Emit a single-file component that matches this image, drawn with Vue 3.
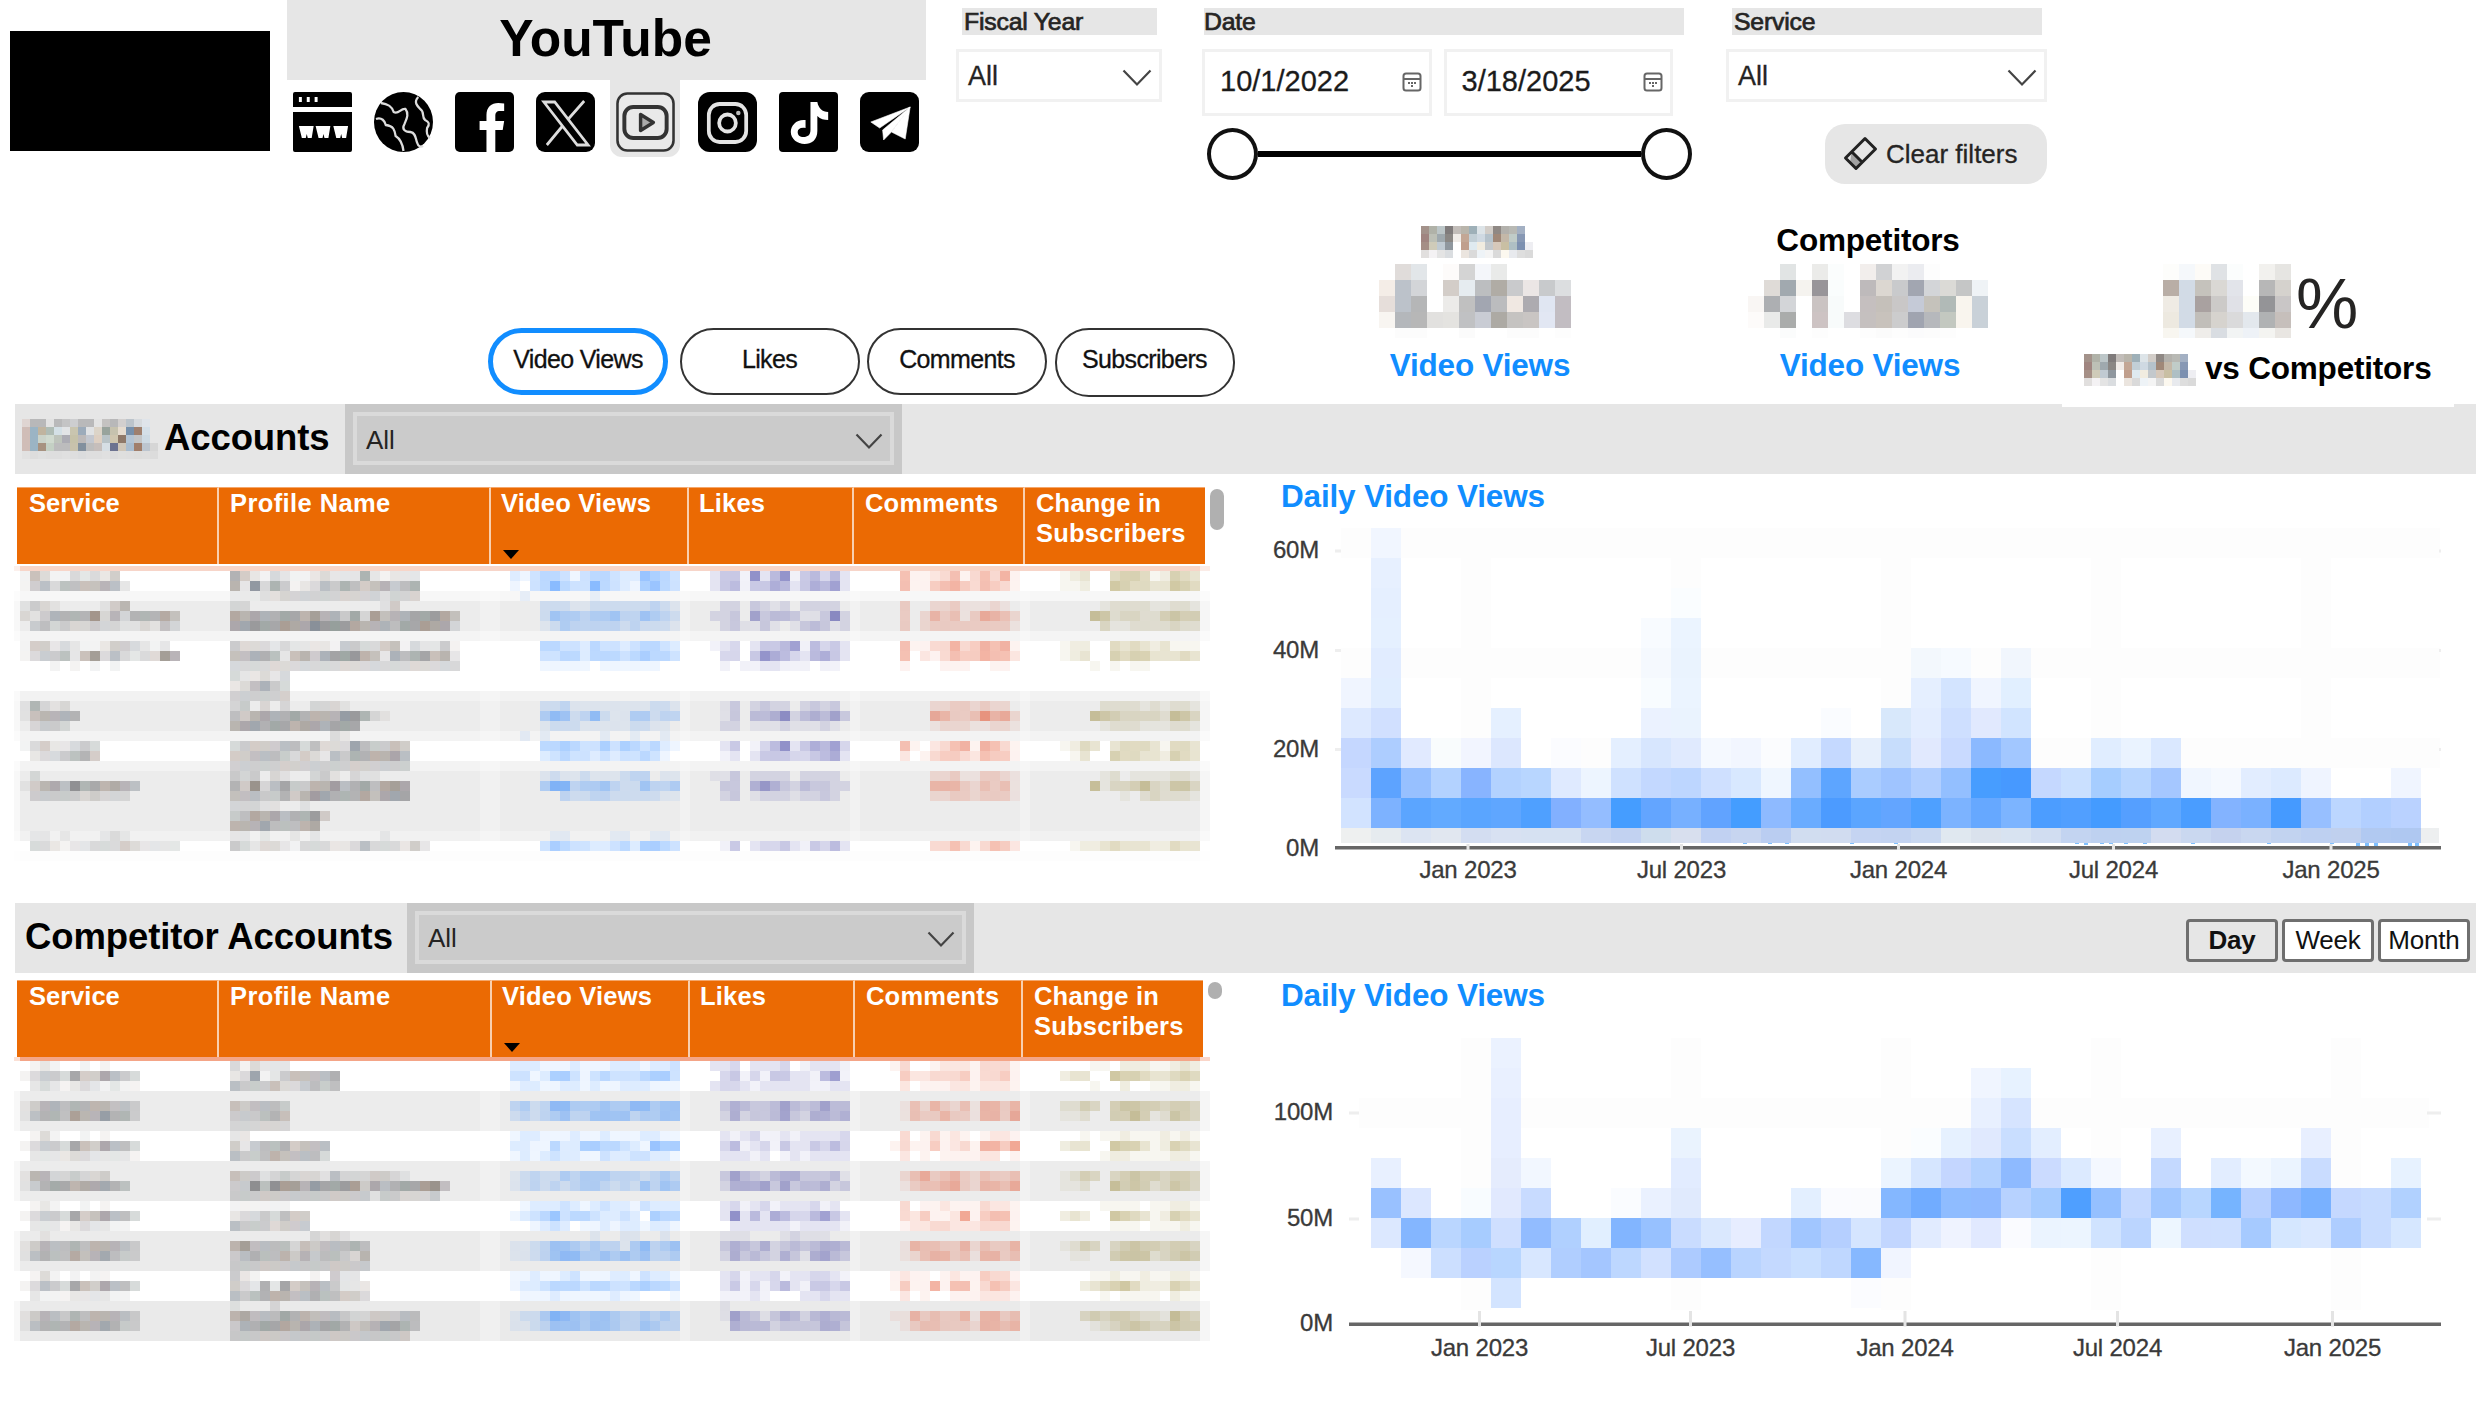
<script setup>
const services = ['web', 'globe', 'facebook', 'x', 'youtube', 'instagram', 'tiktok', 'telegram']
const metrics = ['Video Views', 'Likes', 'Comments', 'Subscribers']

// Inks of the obscured table cells, per column
const inks = {
  s: [20, [84, 84, 88]],
  p: [230, [80, 80, 84]],
  v: [510, [30, 125, 255]],
  l: [700, [72, 72, 165]],
  c: [880, [225, 85, 50]],
  g: [1060, [150, 132, 50]],
}
const keys = ['s', 'p', 'v', 'l', 'c', 'g']
const tints = [[0, 0, 0], [28, 6, -12], [-8, 4, 14], [4, 4, 4], [14, 4, 8], [-6, 8, 0], [18, 8, -6]]

function cells(lines) {
  const out = []
  for (const [y, ...fields] of lines) {
    fields.forEach((str, f) => {
      const key = keys[f]
      const [x0, ink] = inks[key]
      for (let i = 0; i < str.length; i++) {
        const d = +str[i]
        if (!d) continue
        const t = f < 2 ? tints[(i * 5 + y / 10 * 3 | 0) % 7] : tints[((i * 3 + (y / 10 | 0)) % 2) * 3]
        const rgb = ink.map((c, k) => Math.max(0, c + t[k] * 1.1))
        out.push({ x: x0 + i * 10, y, fill: `rgba(${rgb.map(Math.round).join(',')},${(d * 0.075).toFixed(3)})` })
      }
    })
  }
  return out
}

const ownRows = cells([
  [571, '1531132324', '6421321123222621222', '21344313443226543', '024418258145352', '00511235135361', '12300455412543'],
  [581, '14535555652', '6283641235465456456', '10347433743215643', '024514465246572', '00511456435431', '11200654433654'],
  [591, '', '1112233333333332333', '01000000100000000', '', '', ''],
  [601, '132100001350', '2200000000000001300', '00022211222222321', '002203212022220', '00300223111210', '00001222211221'],
  [611, '2135555825255564', '65655665755362745566764', '00025443445335432', '022306344311382', '00302534136542', '00065233224544'],
  [621, '0342322322112142', '66766766877765554667662', '00012433333232221', '002311310134312', '00302333333331', '00003112222322'],
  [641, '14423211244321200', '43332322221443345132241', '00044332433234432', '012302445715342', '00511336346561', '12200434323111'],
  [651, '1344525835323386', '55665256467786526567562', '00033442444345443', '003304865325642', '00502135446552', '12300545533343'],
  [661, '0001010101000', '33333333333333333333333', '00011111011111100', '001011221110110', '00100011100110', '00010101100000'],
  [671, '', '322323', '', '', '', ''],
  [681, '', '235643', '', '', '', ''],
  [691, '', '333333', '', '', '', ''],
  [701, '152120', '2302020022210', '00022311111111221', '001302322023230', '00000223323220', '00002222121221'],
  [711, '145555', '4356556555577521', '00046523621144233', '001304458245463', '00000653348562', '00065433332653'],
  [721, '023320', '5665665665666', '00012221111122110', '002201112111210', '00000122211221', '00001222111221'],
  [731, '', '0000000000210', '01010000010010010', '', '', ''],
  [741, '13422343', '344445535333754454', '00044543353543421', '002401358246573', '00510235616531', '12430344431443'],
  [751, '02334564', '445554343254666675', '00023433232334310', '001202444334562', '00201344325441', '01300544332543'],
  [761, '', '333333333333333333', '', '', '', ''],
  [771, '020000000', '323021002310211000', '00012112111233011', '011302222022220', '00000223113321', '00001201111221'],
  [781, '135648565654', '538246335574564676', '00047734453225334', '003305753243322', '00000555324341', '00061334632553'],
  [791, '033333232220', '444335357655564666', '00000322332222211', '002301222122320', '00000223323331', '00000010232221'],
  [801, '', '222110010', '', '', '', ''],
  [811, '', '3465645573', '', '', '', ''],
  [821, '', '5556444560', '', '', '', ''],
  [831, '0110100012100', '1101001010000001', '00001100001100110', '', '', ''],
  [841, '0332122333432222', '43233213332235333242', '00035433223425543', '001402334214352', '00000335313542', '01223433322433'],
])

const competitorRows = cells([
  [1061, '0121001010', '3132220000', '22211121112221223', '022302223012221', '01300122213331', '00011022211232'],
  [1071, '134437447543', '23712455556', '33125531343334553', '003413144221571', '00422333413341', '23300655433454'],
  [1081, '023212321211', '5444533454500', '12211221211222111', '023321222221122', '00201112212221', '00010020011221'],
  [1101, '135545555443', '434443', '34236644454466455', '003543346434644', '00142532415535', '22430455443443'],
  [1111, '145547557553', '333454', '23234533555534455', '002523346325545', '00143353315536', '11200446412543'],
  [1121, '', '222222', '', '', '', ''],
  [1131, '0131001010', '2200000', '12211121121112211', '002123112122223', '00301312101221', '00101121112121'],
  [1141, '134437547553', '4245564555', '22114225544321655', '003512314224353', '01311412316647', '23300655312543'],
  [1151, '022223322221', '5445655553', '12123221132233221', '002221201212222', '00201011112201', '00001221111221'],
  [1171, '15522322300', '4331232221422233210', '12322434443332343', '003643245533341', '00246345324334', '12430345443443'],
  [1181, '13566566654', '3384877576677364566784', '12323234432325354', '002555636344523', '00134456325546', '11200645423543'],
  [1191, '', '3333333333333313322230', '', '', '', ''],
  [1201, '0121001010', '1111110', '01222321232213222', '002312312223120', '00301121113221', '00001111011221'],
  [1211, '134437457553', '23343544', '12346344322320544', '002825265335742', '00324112714551', '23200654312543'],
  [1221, '022212322110', '54443444', '00123201121221221', '000222222122221', '00122332223331', '00000111011121'],
  [1231, '0010000000', '0000000021210', '00000000100110010', '001110001211100', '', ''],
  [1241, '135445455543', '57444424344454', '11235543433146345', '003543523434554', '00154433524335', '12430345443443'],
  [1251, '145446456433', '34544535344325', '11235664454545334', '002534325315643', '00124553415534', '01100455523454'],
  [1261, '', '33333333333333', '', '', '', ''],
  [1271, '0131010110', '4210000010422', '11211231112213221', '002312231223321', '01211012114331', '00011211211221'],
  [1281, '135437547553', '43262745654222', '12234443443345443', '002413135214434', '01411615513542', '00234564222543'],
  [1291, '021112222110', '54566655655443', '01112111112110001', '001112100022322', '00201001112221', '00001011110211'],
  [1301, '', '1000200000', '', '001000000000000', '', ''],
  [1311, '135435455543', '5644465544432233344', '12247654554334343', '001643135424544', '01153433515534', '00343443221643'],
  [1321, '145556556533', '3556665656653456654', '11235554554335433', '000544423333553', '00134433325545', '00012345433544'],
  [1331, '', '333333333333333333', '', '', '', ''],
])

const strip = (y, h, fill) => ({ y, h, fill })
const accounts = [
  {
    id: 'own', title: 'Accounts', masked: true, x: [202, 272, 198, 165, 171, 180], thumb: 41,
    selectWidth: 557, selectStart: 330, viewBox: '0 564 1240 339', height: 339, cells: ownRows,
    strips: [
      strip(566, 5, '#f7d5c9'), strip(591, 10, '#f7f7f7'), strip(601, 30, '#ececec'), strip(631, 10, '#f4f4f4'),
      strip(691, 10, '#f2f2f2'), strip(701, 30, '#ececec'), strip(731, 10, '#f3f3f3'), strip(761, 10, '#f3f3f3'),
      strip(771, 60, '#ececec'), strip(831, 10, '#f1f1f1'), strip(851, 10, '#fdfdfd'),
    ],
  },
  {
    id: 'competitor', title: 'Competitor Accounts', masked: false, x: [202, 273, 198, 165, 168, 180], thumb: 17,
    selectWidth: 567, selectStart: 392, viewBox: '0 1057 1240 345', height: 345, cells: competitorRows,
    strips: [
      strip(1057, 4, '#f4a587'), strip(1091, 40, '#ececec'), strip(1161, 40, '#ececec'),
      strip(1231, 40, '#ebebeb'), strip(1301, 40, '#eaeaea'),
    ],
  },
]
const heads = ['Service', 'Profile Name', 'Video Views', 'Likes', 'Comments', 'Change in\nSubscribers']

// Heatmap rows: first column index, then colours ('-' leaves a cell empty)
function heat(rows) {
  return rows.flatMap(([y, h, ...runs]) => runs.flatMap((run) => {
    const [start, ...cols] = run.split(' ')
    return cols.map((c, i) => ({ x: 1341 + (+start + i) * 30, y, h, fill: c === '-' ? 'none' : '#' + c }))
  }))
}
const charts = [
  {
    viewBox: '1240 474 1244 429', height: 429, titleY: 506.5, axisX: 1335, axisY: 846, labelX: 1319, xBase: 878,
    yLabels: [['60M', 557.5, 551], ['40M', 658, 650.5], ['20M', 756.5, 749.5], ['0M', 856, 0]],
    xLabels: [['Jan 2023', 1468], ['Jul 2023', 1681.5], ['Jan 2024', 1898.5], ['Jul 2024', 2113.5], ['Jan 2025', 2331]],
    washes: [[1341, 528, 1099, 30], [1341, 648, 1099, 30], [2030, 738, 410, 30], [1461, 528, 30, 240], [1671, 528, 30, 90], [1881, 528, 30, 180], [2091, 528, 30, 210], [2301, 528, 30, 240]],
    tickTop: 844,
    cells: heat([
      [528, 30, '1 f1f6ff'],
      [558, 30, '1 e7f0ff'],
      [588, 30, '1 e5efff', '11 fafdff'],
      [618, 30, '1 e5f0ff', '10 f8fbff ebf4ff'],
      [648, 30, '1 e1ecff', '10 f5f9fe eaf3fe', '19 f3f8fd f6faff fdfdfd f1f6fd'],
      [678, 30, '0 f0f5ff e0edff', '10 f8fcff ebf4ff', '19 e5efff d3e4ff f0f5ff e1efff'],
      [708, 30, '0 dde9ff d1e0ff', '5 e5f0ff', '10 ebf2ff eaf3fe', '16 fafcff', '18 d8e8fb e3edff cedfff e1e9fe d1e4ff'],
      [738, 30, '0 c5d7ff adcdff e1eaff f9fcfd f2f5ff dce7fe - fbfcff fdfdfd e4efff d7e6fe e0eafe f5f9ff f2f6ff fbfcfe e1edff c5d9ff e6effc c7ddfc e1e9fe c9daff 8bb9ff a2c7ff - - e0edff eaf3ff dae8ff'],
      [768, 30, '0 c9daff 5da3ff 97c0ff b3d2ff 88b4ff b3d2ff b8d6ff dfeaff edf5ff cfe1ff c3d8ff bdd6ff cfe0ff d8e8ff eff6ff 93bfff 5da5ff aaccff 9fc4ff b0ceff 93bfff 479dff 4799ff c5d8ff cae0ff a6cdff b7d5ff a5c7ff f0f6ff f5f9ff e2edff dceaff eff4ff - - f0f5ff'],
      [798, 30, '0 d2e3ff 7db2ff 5ba5ff 62aaff 5aa5ff 5fa6ff 4fa0ff 82b0ff 94bdff 459dff 63a5ff 77b0ff 61a3ff 449dff 8ebaff 6aacff 4c9bff 5ba5ff 63a5ff 4ea0ff 7cb3ff 66a8ff 7cb4ff 4c9dff 519fff 449bff 559fff 60a8ff 4a9dff 83b3ff 7ab1ff 459aff 97bfff bcd6ff b2cfff bad2ff'],
      [828, 15, '0 eef0f0 e6ebef dce4f2 e1e7f0 d3ddf1 d8e1f2 d6e1f2 d6e1f2 c8d6f1 c2d2f1 cedded d8dfee c1d1f2 c7d5f0 bacdf1 d1ddf0 d1dcf0 c5d4f2 c3d3f1 c9d8f1 e0e8f0 dae2ed d8e3f1 d1ddf1 c3d4f1 bed1f0 bed2f0 d3dcf0 cad8f0 c5d2ee c9d7f0 c2d3f0 bed0f1 c0d0ee b1c9f1 afc8f1'],
    ]),
    stubs: [[1745, 1], [1770, 1], [1787, 1], [1852, 1], [1896, 1], [2077, 1], [2086, 2], [2102, 1], [2111, 1], [2126, 1], [2145, 1], [2193, 1], [2269, 1], [2332, 1], [2358, 3], [2367, 3], [2376, 3], [2410, 4], [2417, 4]],
    tail: true,
  },
  {
    viewBox: '1240 973 1244 429', height: 429, titleY: 1005.5, axisX: 1349, axisY: 1322.5, labelX: 1333, xBase: 1355.5,
    yLabels: [['100M', 1119.5, 1113], ['50M', 1225.5, 1219], ['0M', 1331, 0]],
    xLabels: [['Jan 2023', 1479.5], ['Jul 2023', 1690.5], ['Jan 2024', 1905], ['Jul 2024', 2117.5], ['Jan 2025', 2332.5]],
    washes: [[1359, 1098, 1070, 30], [1461, 1038, 30, 272], [1671, 1038, 30, 272], [1881, 1038, 30, 272], [2091, 1038, 30, 272], [2331, 1038, 30, 272]],
    tickTop: 1311,
    cells: heat([
      [1038, 30, '5 ebf2ff'],
      [1068, 30, '5 e9f0ff', '21 f0f5ff e7f2ff'],
      [1098, 30, '5 e7eeff', '21 e8f0ff d6e4ff'],
      [1128, 30, '5 e7eeff', '11 eaf3fe', '19 fafdff e6f1ff e0e9fe c9deff e3eeff', '27 e8f0ff', '32 e8efff'],
      [1158, 30, '1 e8f0ff', '5 e5ecfd f2f7ff', '11 e2ecff', '18 ebf4ff d6e6ff c4d6ff b2d1ff 8ebaff cbdbff dceaff f4f8ff - c4d9ff - e2edff f3f9ff ebf4ff c9dcff - - e7f2ff'],
      [1188, 30, '1 99c1ff dce7ff - f8fcff e1e9fe c8dbff - - fafcff eaf1ff e0eafd - - - e3efff fafbff fafbfe 84b7ff 71acff 8fbcff 90baff b7d2ff a5cbff 4f9fff 95c0ff c5d9ff a1c7ff b8d6ff 76b4ff b7d0ff 8eb8ff 79b1ff c5d8ff c8dcff b1d1ff'],
      [1218, 30, '1 dce8ff 84b6ff bad6ff a7ccff cfdfff 92bcff b0d0ff e1efff 82b5ff 97c1ff c9dcff dae8fe e7edff c2d7ff a1c6ff b5cfff d5e5ff c2d6ff e1ebff eff3ff e1e9ff fafbff ebf4ff ecf5ff d0e3ff bbd5ff edf6ff cfdfff cfe0ff a6caff d5e7ff dae8ff aecdff c8dcff d6e7ff'],
      [1248, 30, '2 f5f8ff ccdfff bad1ff b8d6ff d8e7ff b0ceff a4c6ff bdd7ff d2e1ff adcbff 96bfff b9d4ff c4d9ff c9dfff bfd7ff 86b8ff f1f5ff'],
      [1278, 30, '5 d3e4ff', '17 fbfcff'],
    ]),
    stubs: [],
    tail: false,
  },
]

// Obscured figures and names
function mosaic(size, rows) {
  return rows.flatMap((row, r) => row.split(' ').map((c, i) => ({ x: i * size, y: r * size, size, fill: c === '-' ? 'none' : '#' + c })))
}
const ownValue = mosaic(16, [
  '- e0dcda e2e6e9 - fdfbfa d4d4d4 f4f6fa e9eae9',
  'f4ede7 bcc2ca d3d5d8 - d3cdc8 e6ecf0 bcbec0 b0aca5 c9cacc ebe6e5 c8cacc dcdee0',
  'e6deda bcc2ca b5b6b7 - ecebe9 c0c0c0 a2a6b1 bbbcbe f0e8e2 adabb0 e0e6f2 c2bdc2',
  'f8f5f1 b4b7bb b7b7b7 e2e1df e4e3e0 c0c1c3 c9ccd4 adaaa4 c5c3c1 c9c5c3 e2e7f3 c2bdc2',
  '- fcfcfc fcfcfc - - fbfbfb - - fcfcfc fcfcfc - fdfdfd',
])
const rivalValue = mosaic(16, [
  '- - e1e4e4 - ebebe9 fbfdfd - f2eeec d1d2d4 f2f2f2 ebecf0 fdfdfd',
  '- dfdbd7 a1a9af f5f3ef 989599 fafdfd - bebabb dcd7d1 c9cacc a2a6b1 d3d5d8 dbdad6 c5c6c6 eff3f6',
  'f9f6f4 adafb2 d3d5d8 - cac3c2 f8fbfb - c5bfbf c5c0ba c9c7c7 c5cad7 c5c2bb b1bab7 f9f5ee c9d1d8',
  'fdfbfa e9eae9 aaacab - cdc3c3 f8fbfb dddde1 c5c0bf c8c2bc cccccd a0a4b0 b6b8bc c3c8c0 f9f5ee c9d1d8',
  '- - fbfcfc - fdfdfd - - fdfdfd fbfbfb fdfdfd fbfbfc fcfcfc fdfdfd',
])
const ratioValue = mosaic(16, [
  'fdfdfb f5f8fb fdfbf7 dfe2e5 fbfdfd - f2f1ee e6e5e2',
  'b9aea6 d2dbe6 c5c2bc dad8d4 e2e4ea - b7b7b7 d5d2cd',
  'efebe4 d2dbe6 a9a1a0 cccac8 e0e1e7 fdfdf8 949497 c9c6c6',
  'ede9e0 d2dbe6 c1beb9 d6d3ce dadadb e3e8ed b0b2b3 c6bfbb',
  'f8f6f0 f5f8fb efedea d9dde2 f2f4f4 eef2f7 f4f4f1 e9e6e2',
])
const brand = mosaic(8, [
  'a3928a b0b2a8 bcc6c8 7f7b7b c2bdb9 b9b5ab 9eb0b8 dde4e8 d2cdc8 8f8884 b3b1ac b8b9b4 a3b0c3',
  'a08580 bdc0b6 9fa9ae 8a8784 f0ece8 c3a795 c2cfd6 cfd9e2 b5c2cb a08878 c4b8a8 c0ccc8 8798b4',
  'a58f86 cfcbb9 c0cad2 8f979e ffffff c09f8d dfeaf0 f1ece0 c3c8cc d6c8ba c9bfa3 aebfc4 7c90b0 eeeef2',
  'e1dfde f4f2f4 e4e4e4 dadde0 ffffff ebe5df dadada eef3f7 f4f4f4 dadada fcf8ef e8eaee dedede dadada',
])
const heading = mosaic(8, [
  'dfd5d2 b8b8b9 b8b8b9 e2e2e2 b9b9ba c4c4c5 cdced0 b9b9ba b9b9ba e3e3e3 c4c2c1 b8b8b9 d2cfce bcc4cb d6dade dfe4ea',
  'd0bdb7 9bb4c4 c0b49f afbcb5 d4e0e6 e2e4e6 c9c5af 9cabba e0e2e4 dcd4c8 98a39c c6c2ae e6dccf 7790ab 9f806e d4dfe8',
  'd0bdb7 9bb4c4 cbd3c9 d0dacf bec4bc acacb4 c6c2a9 bcb9b9 c3c7cf ddcfc2 b9c3c7 cfc6af 8e7868 b3c4d4 c3c5c7 cddae4',
  'd0bdb7 9bb4c4 a79280 c4d0c4 bcbcbd bcbcbd c8c2ac 82909e bdbdbd c6bebb d6dee4 6d7390 cfc6b8 a9bcce a07e6b bcc5cf d6d6d6',
  'e1e1e1 dddddd dfe0e0 dedede dedede e0e0e0 dedede dbdcdd dedede dedede e0e0e0 dcdcdd dfdfde dedede dddddc dedede dcdcdc',
])
</script>

<template>
  <main class="report">
    <header class="top">
      <div class="logo"></div>
      <section class="brand">
        <h1>YouTube</h1>
        <nav class="services">
          <a v-for="s in services" :key="s" class="service" :class="{ active: s === 'youtube' }">
            <svg viewBox="0 0 60 60" width="59" height="60" preserveAspectRatio="none">
              <g v-if="s === 'web'">
                <path d="M2 0h56q2 0 2 2v13H0V2q0-2 2-2zM0 20h60v38q0 2-2 2H2q-2 0-2-2z" />
                <path d="M6 5h3v5H6zM14 5h3v5h-3zM22 5h3v5h-3z" fill="#fff" />
                <path d="M6 34h15l-2 12h-4l-1-4-1 4H9zM23 34h15l-2 12h-4l-1-4-1 4h-4zM41 34h15l-2 12h-4l-1-4-1 4h-4z" fill="#fff" />
              </g>
              <g v-else-if="s === 'globe'">
                <circle cx="30" cy="30" r="30" />
                <path d="M7 11c7 1 11 3 13 9 5 3 7-4 12-3 4 5 1 10-1 15-3 5 0 8 6 8 6 1 5 7 7 11 1 4 4 4 6 3M2 27c6-2 9 2 10 6 8 1 9 5 10 11 5 3 7 7 8 15M45 5c-5 5-1 9 2 12 5 3 1 8 5 11 4 2 5 4 2 8-1 5 0 8 3 10" fill="none" stroke="#ddd" stroke-width="2.300" />
              </g>
              <g v-else-if="s === 'facebook'">
                <rect width="60" height="60" rx="5" />
                <path d="M32 60V38h-7v-9h7v-6c0-8 5-12 12-12l6 .5V19h-4c-4 0-5 2-5 5v5h9l-1.500 9H41v22z" fill="#fff" />
              </g>
              <g v-else-if="s === 'x'">
                <rect width="60" height="60" rx="9" />
                <path d="M8 10h11l34 43H42zM49 9L32 28M27 34L11 53" fill="none" stroke="#ddd" stroke-width="2.800" />
              </g>
              <g v-else-if="s === 'youtube'" fill="none" stroke="#333">
                <rect x="1.500" y="1.500" width="57" height="57" rx="10" stroke-width="2.600" fill="#e9e9e9" />
                <rect x="8.500" y="15" width="43" height="31" rx="9" stroke-width="4" />
                <path d="M25 22.500v16l13-8z" stroke-width="3.500" stroke-linejoin="round" fill="#aaa" />
              </g>
              <g v-else-if="s === 'instagram'">
                <rect width="60" height="60" rx="12" />
                <g fill="none" stroke="#e4e4e4" stroke-width="3.800"><rect x="11" y="12" width="38" height="38" rx="11" /><circle cx="30" cy="31" r="8.500" /></g>
                <circle cx="41" cy="21" r="2.300" fill="#bbb" />
              </g>
              <g v-else-if="s === 'tiktok'">
                <rect width="60" height="60" rx="4" />
                <path d="M32 10h7c1 6 5 10 11 10v8c-4 0-8-1-11-4v15c0 9-6 13-13 13S12 47 12 40s6-13 15-12v8c-5-1-8 1-8 4s2 5 6 5 7-2 7-7z" fill="#fff" />
              </g>
              <g v-else>
                <rect width="60" height="60" rx="9" />
                <path d="M51 15L11 30l9 6zM51 15L23 38l1 10 7-7zM51 15L32 40l14 7z" fill="#fff" stroke="#fff" stroke-width=".6" />
              </g>
            </svg>
          </a>
        </nav>
      </section>

      <section class="slicer fiscal">
        <label>Fiscal Year</label>
        <div class="select"><span>All</span><svg class="chev" viewBox="0 0 30 18" width="30" height="18"><path d="M1.500 1.500L15 15.500 28.500 1.500" /></svg></div>
      </section>

      <section class="slicer date">
        <label>Date</label>
        <div class="dates">
          <div v-for="d in ['10/1/2022', '3/18/2025']" :key="d" class="dateBox">
            <span>{{ d }}</span>
            <svg viewBox="0 0 20 20" width="20" height="20"><rect x="1.500" y="1.500" width="17" height="17" rx="2.500" fill="none" stroke="#666" stroke-width="2" /><path d="M2 7h16M6 11h2M9 11h2M12 11h2M9 14h2" fill="none" stroke="#666" stroke-width="2" /></svg>
          </div>
        </div>
        <div class="slider"><i></i><b></b><i></i></div>
      </section>

      <section class="slicer serviceSlicer">
        <label>Service</label>
        <div class="select"><span>All</span><svg class="chev" viewBox="0 0 30 18" width="30" height="18"><path d="M1.500 1.500L15 15.500 28.500 1.500" /></svg></div>
        <button class="clear">
          <svg viewBox="0 0 35 36" width="35" height="36"><path d="M22 2.500L32.500 13 13 32.500 2.500 22z M8.500 15.500L19 26" fill="none" stroke="#222" stroke-width="3" stroke-linejoin="round" /><path d="M8.500 16L19 26.500l-6 6L7 27z" fill="#222" opacity=".35" /></svg>
          <span>Clear filters</span>
        </button>
      </section>
    </header>

    <section class="summary">
      <div class="pills">
        <button v-for="(m, i) in metrics" :key="m" class="pill" :class="{ on: i === 0, tall: i === 3 }">{{ m }}</button>
      </div>
      <div class="kpi own">
        <svg class="name" viewBox="0 0 112 32" width="112" height="32" shape-rendering="crispEdges"><rect v-for="(c, i) in brand" :key="i" :x="c.x" :y="c.y" width="8" height="8" :fill="c.fill" /></svg>
        <svg class="value" viewBox="0 0 192 74" width="192" height="74" shape-rendering="crispEdges"><rect v-for="(c, i) in ownValue" :key="i" :x="c.x" :y="c.y" width="16" height="16" :fill="c.fill" /></svg>
        <span class="metric">Video Views</span>
      </div>
      <div class="kpi rival">
        <span class="who">Competitors</span>
        <svg class="value" viewBox="0 0 240 74" width="240" height="74" shape-rendering="crispEdges"><rect v-for="(c, i) in rivalValue" :key="i" :x="c.x" :y="c.y" width="16" height="16" :fill="c.fill" /></svg>
        <span class="metric">Video Views</span>
      </div>
      <div class="kpi ratio">
        <div class="percent">
          <svg viewBox="0 0 134 74" width="134" height="74" shape-rendering="crispEdges"><rect v-for="(c, i) in ratioValue" :key="i" :x="c.x" :y="c.y" width="16" height="16" :fill="c.fill" /></svg>
          <span>%</span>
        </div>
        <div class="versus">
          <svg viewBox="0 0 112 32" width="112" height="32" shape-rendering="crispEdges"><rect v-for="(c, i) in brand" :key="i" :x="c.x" :y="c.y" width="8" height="8" :fill="c.fill" /></svg>
          <span>vs Competitors</span>
        </div>
      </div>
    </section>

    <template v-for="(a, n) in accounts" :key="a.id">
      <section class="band">
        <h2 :style="{ width: a.selectStart + 'px' }">
          <svg v-if="a.masked" viewBox="0 0 136 40" width="136" height="40" shape-rendering="crispEdges"><rect v-for="(c, i) in heading" :key="i" :x="c.x" :y="c.y" width="8" height="8" :fill="c.fill" /></svg>
          <span>{{ a.title }}</span>
        </h2>
        <div class="bandSelect" :class="a.id" :style="{ width: a.selectWidth + 'px' }">
          <div><span>All</span><svg class="chev" viewBox="0 0 28 17" width="28" height="17"><path d="M1.500 1.500L14 14.500 26.500 1.500" /></svg></div>
        </div>
        <div v-if="n === 1" class="grain"><button class="on">Day</button><button>Week</button><button>Month</button></div>
      </section>

      <section class="content">
        <div class="tableSide" :class="a.id">
          <div class="tableHead">
            <div v-for="(h, i) in heads" :key="h" class="th" :class="'c' + i" :style="{ width: a.x[i] + 'px' }">{{ h }}<i v-if="i === 2" class="sort"></i></div>
            <span class="thumb" :style="{ height: a.thumb + 'px' }"></span>
          </div>
          <svg :viewBox="a.viewBox" width="1240" :height="a.height" shape-rendering="crispEdges">
            <g v-for="s in a.strips" :key="s.y">
              <rect x="20" :y="s.y" width="1180" :height="s.h" :fill="s.fill" />
              <rect x="14" :y="s.y" width="6" :height="s.h" :fill="s.fill" opacity=".35" />
              <rect x="1200" :y="s.y" width="10" :height="s.h" :fill="s.fill" opacity=".45" />
              <g v-if="s.h > 5" fill="#fff" opacity=".3"><rect v-for="x in [480, 490, 680, 850, 1020]" :key="x" :x="x" :y="s.y" width="10" :height="s.h" /></g>
            </g>
            <rect v-for="(c, i) in a.cells" :key="i" :x="c.x" :y="c.y" width="10" height="10" :fill="c.fill" />
          </svg>
        </div>

        <svg class="chart" :viewBox="charts[n].viewBox" width="1244" :height="charts[n].height">
          <text class="chartTitle" x="1281" :y="charts[n].titleY" textLength="264">Daily Video Views</text>
          <g shape-rendering="crispEdges">
            <rect v-for="(w, i) in charts[n].washes" :key="'w' + i" :x="w[0]" :y="w[1]" :width="w[2]" :height="w[3]" fill="#fdfdfd" />
            <rect v-for="(c, i) in charts[n].cells" :key="i" :x="c.x" :y="c.y" width="30" :height="c.h" :fill="c.fill" />
            <rect v-if="charts[n].tail" x="2421" y="828" width="18" height="15" fill="#edeff0" />
            <rect v-for="s in charts[n].stubs" :key="s[0]" :x="s[0] - 2" y="843" width="4" :height="s[1]" fill="#7fc0ff" />
          </g>
          <rect :x="charts[n].axisX" :y="charts[n].axisY" :width="2441 - charts[n].axisX" height="3.500" fill="#666" />
          <g v-for="t in charts[n].xLabels" :key="t[0]">
            <rect :x="t[1] - 1.500" :y="charts[n].tickTop" width="3" :height="charts[n].axisY + 4 - charts[n].tickTop" fill="#e4e4e4" />
            <text class="tick" :x="t[1]" :y="charts[n].xBase" text-anchor="middle">{{ t[0] }}</text>
          </g>
          <g v-for="t in charts[n].yLabels" :key="t[0]">
            <text class="tick" :x="charts[n].labelX" :y="t[1]" text-anchor="end">{{ t[0] }}</text>
            <g v-if="t[2]" fill="#eee">
              <rect :x="charts[n].axisX" :y="t[2] - 1.500" :width="n ? 10 : 6" height="3" />
              <rect :x="n ? 2427 : 2439" :y="t[2] - 1.500" :width="n ? 14 : 2" height="3" />
            </g>
          </g>
        </svg>
      </section>
    </template>
  </main>
</template>

<style>
body { background: #fff; }
</style>

<style scoped>
.report { width: 2484px; height: 1402px; overflow: hidden; background: #fff; color: #111; font-family: "Liberation Sans", Arial, sans-serif; }
.report * { box-sizing: border-box; }
svg { display: block; flex: none; }
button { padding: 0; font: inherit; color: inherit; }
h1, h2 { margin: 0; }

.top { display: flex; height: 200px; align-items: flex-start; }
.logo { width: 260px; height: 120px; margin: 31px 17px 0 10px; background: #000; flex: none; }
.brand { width: 639px; margin-right: 30px; flex: none; }
h1 { height: 80px; padding-right: 2px; background: #e6e6e6; text-align: center; font-size: 51.500px; line-height: 77px; color: #000; }
.services { display: flex; height: 77px; }
.service { width: 70px; margin-right: 11px; padding: 12px 5.500px 0; flex: none; }
.service:last-child { margin-right: 0; }
.active { background: #e6e6e6; border-radius: 0 0 12px 12px; margin-left: -1px; margin-right: 12px; padding-left: 6px; }

.slicer { display: flex; flex-direction: column; flex: none; }
.slicer label { height: 27px; margin-top: 8px; background: #e6e6e6; padding-left: 2px; font-size: 24.800px; line-height: 27px; letter-spacing: -.2px; color: #252423; -webkit-text-stroke: .7px #252423; }
.fiscal { width: 206px; }
.fiscal label { margin-left: 6px; margin-right: 5px; }
.select { height: 53px; margin-top: 14px; border: 3px solid #f1f1f1; display: flex; align-items: center; justify-content: space-between; padding: 2px 7px 0 9px; font-size: 27px; color: #252423; -webkit-text-stroke: .3px #252423; }
.chev { margin-top: 2px; }
.chev path { fill: none; stroke: #444; stroke-width: 2.200; }
.date { width: 490px; margin-left: 40px; }
.date label { margin-left: 2px; margin-right: 8px; padding-left: 0; }
.dates { display: flex; gap: 12px; margin-top: 14px; }
.dateBox { width: 229.500px; height: 67px; border: 3px solid #f1f1f1; display: flex; align-items: center; justify-content: space-between; padding: 0 7px 2px 15px; font-size: 29px; color: #1b1b1b; -webkit-text-stroke: .3px #1b1b1b; }
.slider { display: flex; align-items: center; height: 52px; margin: 12px 0 0 5px; }
.slider i { width: 51px; height: 52px; border: 4px solid #111; border-radius: 50%; background: #fff; }
.slider b { width: 384px; height: 6px; background: #000; }
.serviceSlicer { width: 321px; margin-left: 34px; }
.serviceSlicer label { margin-left: 6px; margin-right: 5px; }
.clear { display: flex; align-items: center; align-self: flex-end; width: 222px; height: 60px; margin-top: 22px; padding-left: 18px; gap: 8px; border: 0; border-radius: 20px; background: #e6e6e6; font-size: 26px; color: #252423; -webkit-text-stroke: .3px #252423; }

.summary { display: flex; height: 204px; }
.pills { display: flex; gap: 7.500px; margin: 128px 0 0 488px; width: 747px; flex: none; }
.pill { width: 180px; height: 67px; border: 2.500px solid #333; border-radius: 34px; background: #fff; font-size: 25px; letter-spacing: -.65px; padding-bottom: 4px; -webkit-text-stroke: .3px #111; flex: none; }
.pill.on { border: 5px solid #118dff; margin-right: 4px; padding-bottom: 4px; }
.pill.tall { height: 69px; padding-bottom: 6px; }
.kpi { display: flex; flex-direction: column; align-items: center; flex: none; }
.own { width: 202px; margin-left: 144px; padding-top: 26px; }
.own .value { margin-top: 6px; margin-left: -10px; }
.own .name { margin-left: -7px; }
.metric { width: 200px; text-align: center; font-weight: 700; font-size: 31.500px; letter-spacing: -.2px; line-height: 40px; margin-top: 7px; color: #118dff; }
.rival { width: 250px; margin-left: 164px; padding-top: 20px; }
.who { font-weight: 700; font-size: 31.500px; letter-spacing: -.2px; line-height: 40px; color: #000; margin-left: -4px; }
.rival .value { margin-top: 4px; margin-left: -5px; }
.ratio { width: 392px; margin-left: 67px; padding-top: 64px; align-items: flex-start; background: #fff; height: 207px; position: relative; z-index: 1; }
.percent { display: flex; padding-left: 101px; height: 80px; }
.percent span { font-size: 70px; line-height: 80px; color: #252423; margin-left: -1px; }
.versus { display: flex; padding: 10px 0 0 22px; font-weight: 700; font-size: 31.500px; letter-spacing: -.2px; line-height: 28px; color: #000; }
.versus span { margin-left: 9px; white-space: nowrap; }

.band { display: flex; width: 2461px; height: 70px; margin-left: 15px; background: #e6e6e6; }
.band h2 { display: flex; align-items: center; flex: none; padding: 0 0 2px 10px; font-size: 36.500px; letter-spacing: -.1px; white-space: nowrap; color: #000; }
.band h2 svg { margin: 2px 6px 0 -3px; }
.bandSelect { flex: none; padding: 8px; background: #c8c8c8; }
.bandSelect > div { display: flex; align-items: center; justify-content: space-between; height: 53px; border: 4px solid #dadada; background: #cbcbcb; padding: 1px 7px 0 9px; font-size: 26px; color: #252423; }
.bandSelect.own > div { padding-top: 4px; }
.bandSelect.own, .bandSelect.competitor { margin: 0; }
.grain { display: flex; gap: 4px; margin: 16px 6px 0 auto; }
.grain button { width: 92px; height: 43px; border: 3px solid #6f6f6f; border-radius: 4px; background: #fff; font-size: 26px; letter-spacing: -.2px; }
.grain .on { background: #e6e6e6; font-weight: 700; }

.content { display: flex; height: 429px; }
.tableSide { width: 1240px; flex: none; }
.tableSide.own { margin: 0; padding-top: 13px; }
.tableSide.competitor { padding-top: 7px; }
.tableHead { display: flex; height: 77px; padding-left: 17px; }
.th { position: relative; height: 77px; background: #eb6a03; border-right: 2px solid #f9cfae; border-top: 1px solid #f4a76c; color: #fff; font-weight: 700; font-size: 25.500px; letter-spacing: .2px; line-height: 30px; padding: 0 0 0 10px; white-space: pre; flex: none; }
.th.c0 { padding-left: 12px; letter-spacing: 0; }
.th.c1 { padding-left: 11px; letter-spacing: .4px; }
.th.c4 { padding-left: 11px; }
.th.c5 { padding-left: 11px; border-right: 0; }
.sort { position: absolute; left: 12px; bottom: 5px; border: 8px solid transparent; border-top: 9px solid #000; border-bottom: 0; }
.thumb { width: 14px; margin: 2px 0 0 5px; border-radius: 8px; background: #b0b0b0; }
.chart { flex: none; }
.chartTitle { font-weight: 700; font-size: 31.500px; fill: #118dff; }
.tick { font-size: 24px; letter-spacing: -.2px; fill: #3a3a3a; stroke: #3a3a3a; stroke-width: .3px; }
</style>
